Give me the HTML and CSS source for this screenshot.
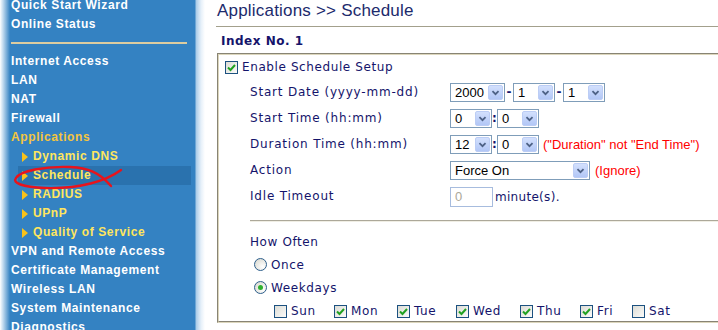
FILE: index.html
```html
<!DOCTYPE html>
<html lang="en">
<head>
    <meta charset="UTF-8">
    <title>Applications &gt;&gt; Schedule</title>
    <link rel="stylesheet" href="styles.css">
</head>
<body>
<div class="page">

    <nav class="side">
        <ul class="menu">
            <li>Quick Start Wizard</li>
            <li>Online Status</li>
            <li class="sep"></li>
            <li>Internet Access</li>
            <li>LAN</li>
            <li>NAT</li>
            <li>Firewall</li>
            <li class="open">Applications</li>
            <li class="sub">Dynamic DNS</li>
            <li class="sub active">Schedule</li>
            <li class="sub">RADIUS</li>
            <li class="sub">UPnP</li>
            <li class="sub">Quality of Service</li>
            <li>VPN and Remote Access</li>
            <li>Certificate Management</li>
            <li>Wireless LAN</li>
            <li>System Maintenance</li>
            <li>Diagnostics</li>
        </ul>
        <!-- red pen mark around Schedule -->
        <svg class="scribble" width="130" height="36" viewBox="0 0 130 36">
            <path d="M121 9 C 106 20, 80 28, 45 27 C 22 26, 12 22, 16 17 C 20 10, 45 5, 70 6 C 88 7, 99 11, 111 25"
                  fill="none" stroke="#e8141c" stroke-width="2.4" stroke-linecap="round"/>
        </svg>
    </nav>

    <main class="main">
        <h1 class="title">Applications &gt;&gt; Schedule</h1>
        <h2 class="index">Index No. 1</h2>

        <div class="box">
            <div class="enable">
                <span class="cb on"><svg viewBox="0 0 11 11"><polyline points="2,5.5 4.5,8 9,3"/></svg></span>
                <span>Enable Schedule Setup</span>
            </div>

            <div class="form">
                <div class="lbl">Start Date (yyyy-mm-dd)</div>
                <div class="ctl">
                    <span class="sel w-year"><span class="val">2000</span><span class="btn"><svg viewBox="0 0 15 15"><path d="M4 6 L7.5 9.5 L11 6"/></svg></span></span>
                    <span class="sym">-</span>
                    <span class="sel w-md"><span class="val">1</span><span class="btn"><svg viewBox="0 0 15 15"><path d="M4 6 L7.5 9.5 L11 6"/></svg></span></span>
                    <span class="sym">-</span>
                    <span class="sel w-md"><span class="val">1</span><span class="btn"><svg viewBox="0 0 15 15"><path d="M4 6 L7.5 9.5 L11 6"/></svg></span></span>
                </div>

                <div class="lbl">Start Time (hh:mm)</div>
                <div class="ctl">
                    <span class="sel w-hm"><span class="val">0</span><span class="btn"><svg viewBox="0 0 15 15"><path d="M4 6 L7.5 9.5 L11 6"/></svg></span></span>
                    <span class="sym colon">:</span>
                    <span class="sel w-hm"><span class="val">0</span><span class="btn"><svg viewBox="0 0 15 15"><path d="M4 6 L7.5 9.5 L11 6"/></svg></span></span>
                </div>

                <div class="lbl">Duration Time (hh:mm)</div>
                <div class="ctl">
                    <span class="sel w-hm"><span class="val">12</span><span class="btn"><svg viewBox="0 0 15 15"><path d="M4 6 L7.5 9.5 L11 6"/></svg></span></span>
                    <span class="sym colon">:</span>
                    <span class="sel w-hm"><span class="val">0</span><span class="btn"><svg viewBox="0 0 15 15"><path d="M4 6 L7.5 9.5 L11 6"/></svg></span></span>
                    <span class="note">("Duration" not "End Time")</span>
                </div>

                <div class="lbl">Action</div>
                <div class="ctl">
                    <span class="sel w-action"><span class="val">Force On</span><span class="btn"><svg viewBox="0 0 15 15"><path d="M4 6 L7.5 9.5 L11 6"/></svg></span></span>
                    <span class="note ignore">(Ignore)</span>
                </div>

                <div class="lbl">Idle Timeout</div>
                <div class="ctl idle">
                    <span class="inp">0</span>
                    <span class="unit">minute(s).</span>
                </div>
            </div>

            <div class="rule"></div>

            <div class="often">
                <div class="often-row">How Often</div>
                <div class="often-row radio-row">
                    <span class="rb"></span><span>Once</span>
                </div>
                <div class="often-row radio-row">
                    <span class="rb on"></span><span>Weekdays</span>
                </div>
                <div class="days">
                    <span class="day"><span class="cb"></span>Sun</span>
                    <span class="day"><span class="cb on"><svg viewBox="0 0 11 11"><polyline points="2,5.5 4.5,8 9,3"/></svg></span>Mon</span>
                    <span class="day"><span class="cb on"><svg viewBox="0 0 11 11"><polyline points="2,5.5 4.5,8 9,3"/></svg></span>Tue</span>
                    <span class="day"><span class="cb on"><svg viewBox="0 0 11 11"><polyline points="2,5.5 4.5,8 9,3"/></svg></span>Wed</span>
                    <span class="day"><span class="cb on"><svg viewBox="0 0 11 11"><polyline points="2,5.5 4.5,8 9,3"/></svg></span>Thu</span>
                    <span class="day"><span class="cb on"><svg viewBox="0 0 11 11"><polyline points="2,5.5 4.5,8 9,3"/></svg></span>Fri</span>
                    <span class="day"><span class="cb"></span>Sat</span>
                </div>
            </div>
        </div>
    </main>

</div>
</body>
</html>
```

FILE: styles.css
```css
body {
    margin: 0;
    background: #fff;
    font-family: "DejaVu Sans", Verdana, sans-serif;
    color: #14146b;
    overflow: hidden;
}

.page {
    display: flex;
    width: 718px;
    height: 330px;
    overflow: hidden;
}

/* left menu */
.side {
    position: relative;
    flex: 0 0 205px;
    background: linear-gradient(to right, #fff 0, #c2dbef 3px, #3482c2 10px, #3482c2 195px, #a8cbe8 196px, #e6f0f9 201px, #fff 205px);
}

.menu {
    list-style: none;
    margin: -4px 0 0 0;
    padding: 0;
    font-family: "Liberation Sans", Arial, sans-serif;
    font-weight: bold;
    font-size: 12px;
    letter-spacing: 0.6px;
    color: #fff;
}

.menu li {
    height: 19px;
    line-height: 19px;
    padding-left: 11px;
    white-space: nowrap;
}

.menu li.sep {
    height: 18px;
    position: relative;
}

.menu li.sep::after {
    content: "";
    position: absolute;
    left: 11px;
    width: 176px;
    top: 8px;
    border-top: 2px solid #dccca0;
}

.menu li.open {
    color: #f5c53e;
}

.menu li.sub {
    display: flex;
    align-items: center;
    padding-left: 22px;
    color: #ffe65e;
}

.menu li.sub::before {
    content: "";
    width: 0;
    height: 0;
    border-left: 6px solid #f8c21a;
    border-top: 5px solid transparent;
    border-bottom: 5px solid transparent;
    margin-right: 5px;
}

.menu li.active {
    margin-left: 18px;
    margin-right: 14px;
    padding-left: 4px;
    background: #2a72ae;
}

.scribble {
    position: absolute;
    left: 0;
    top: 161px;
}

/* main area */
.main {
    flex: 1;
    min-width: 0;
}

.title {
    margin: 0 0 0 11px;
    height: 26px;
    line-height: 22px;
    font-family: "Liberation Sans", Arial, sans-serif;
    font-size: 17px;
    font-weight: normal;
    letter-spacing: 0.2px;
    color: #1c2a6c;
    padding-left: 1px;
    border-bottom: 1px solid #a3a08c;
    white-space: nowrap;
}

.index {
    margin: 2px 0 0 16px;
    line-height: 24px;
    font-size: 12px;
    font-weight: bold;
    letter-spacing: 0.5px;
    color: #14146b;
}

.box {
    margin-left: 12px;
    width: 560px;
    height: 265px;
    border: 2px groove #dcd6bc;
    border-right: none;
    padding-top: 1px;
    font-size: 12px;
    letter-spacing: 0.6px;
}

.enable {
    display: flex;
    align-items: center;
    gap: 4px;
    height: 22px;
    padding-left: 6px;
}

.form {
    display: grid;
    grid-template-columns: 200px auto;
    grid-auto-rows: 26px;
    padding-top: 1px;
    padding-left: 31px;
}

.lbl, .ctl {
    display: flex;
    align-items: center;
    white-space: nowrap;
}

.lbl {
    letter-spacing: 0.8px;
}

.idle {
    padding-top: 2px;
}

.sel {
    display: inline-flex;
    align-items: center;
    justify-content: space-between;
    box-sizing: border-box;
    height: 19px;
    border: 1px solid #7f9db9;
    background: #fff;
    padding: 0 1px 0 4px;
    font-family: "Liberation Sans", Arial, sans-serif;
    font-size: 13px;
    letter-spacing: 0;
    color: #000;
}

.w-year { width: 55px; }
.w-md { width: 42px; }
.w-hm { width: 42px; }
.w-action { width: 140px; }

.btn {
    display: block;
    width: 15px;
    height: 15px;
    box-sizing: border-box;
    border: 1px solid #bccdf5;
    border-radius: 2px;
    background: linear-gradient(#d3e0fd, #b2c7f6);
}

.btn svg {
    display: block;
    width: 13px;
    height: 13px;
}

.btn path {
    fill: none;
    stroke: #4d6185;
    stroke-width: 2;
}

.sym {
    width: 8px;
    text-align: center;
    color: #14146b;
    font-weight: bold;
    letter-spacing: 0;
}

.colon {
    width: 5px;
}

.note {
    margin-left: 4px;
    font-family: "Liberation Sans", Arial, sans-serif;
    font-size: 13px;
    letter-spacing: 0;
    color: #f00;
}

.ignore {
    margin-left: 5px;
}

.inp {
    box-sizing: border-box;
    width: 43px;
    height: 20px;
    line-height: 18px;
    border: 1px solid #a7bcde;
    padding-left: 4px;
    font-family: "Liberation Sans", Arial, sans-serif;
    font-size: 13px;
    letter-spacing: 0;
    color: #aca899;
}

.unit {
    margin-left: 2px;
    letter-spacing: 0.3px;
}

.rule {
    margin: 11px 0 0 31px;
    border-top: 1px solid #aca899;
    border-bottom: 1px solid #f0eee4;
}

.often {
    padding-left: 31px;
    margin-top: 8px;
}

.often-row {
    display: flex;
    align-items: center;
    height: 23px;
}

.radio-row {
    padding-left: 4px;
    gap: 4px;
}

.days {
    display: grid;
    grid-template-columns: 60px 63px 59px 64px 60px 52px auto;
    align-items: center;
    height: 24px;
    padding-left: 24px;
}

.day {
    display: inline-flex;
    align-items: center;
    gap: 4px;
}

/* xp style checkbox and radio */
.cb {
    display: inline-block;
    box-sizing: border-box;
    width: 13px;
    height: 13px;
    border: 1px solid #1c5180;
    background: linear-gradient(135deg, #dcdcd5, #fbfbf9);
}

.cb svg {
    display: block;
    width: 11px;
    height: 11px;
}

.cb polyline {
    fill: none;
    stroke: #21a121;
    stroke-width: 2;
}

.rb {
    display: inline-block;
    box-sizing: border-box;
    width: 13px;
    height: 13px;
    border-radius: 50%;
    border: 1px solid #2e5f8c;
    background: radial-gradient(circle at 70% 70%, #fff 0, #e6e6e0 60%, #cfcfc6 100%);
    position: relative;
}

.rb.on::after {
    content: "";
    position: absolute;
    left: 3px;
    top: 3px;
    width: 5px;
    height: 5px;
    border-radius: 50%;
    background: #2fb02f;
}
```
